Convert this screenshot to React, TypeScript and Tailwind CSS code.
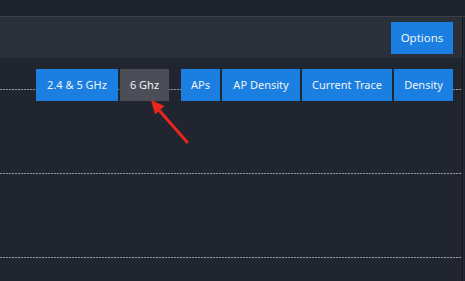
import React from "react";

const font = { fontFamily: '"Noto Sans", "Open Sans", sans-serif' };

function Btn({ label, w, active }: { label: string; w: string; active?: boolean }) {
  return (
    <div
      className={
        "h-[32px] flex items-center justify-center whitespace-nowrap text-[11px] text-[#eef3fa] " +
        w +
        " " +
        (active ? "bg-[#4b4e56]" : "bg-[#1a7fe0]")
      }
    >
      {label}
    </div>
  );
}

function Grid() {
  return (
    <div className="h-px w-full bg-[repeating-linear-gradient(90deg,#8e939b_0px,#8e939b_2px,#3c4049_2px,#3c4049_3px)]" />
  );
}

export default function App() {
  return (
    <div className="w-[465px] h-[281px] overflow-hidden bg-[#1f2330] flex flex-col" style={font}>
      <div className="h-[16px] shrink-0 bg-[#1e222d]" />
      <div className="h-px shrink-0 bg-[#3b3e44]" />
      <div className="flex flex-1 min-h-0">
        <div className="flex flex-col w-[463px] border-r border-[#15181d]">
          <div className="h-[41px] shrink-0 bg-[#2a3039] flex items-center justify-end pr-[9px]">
            <div className="h-[32px] w-[62px] flex items-center justify-center bg-[#1a7fe0] text-[11.5px] text-[#eef3fa]">
              Options
            </div>
          </div>
          <div className="relative flex-1 bg-[#20252f] flex flex-col pt-[31px] gap-[83px]">
            <Grid />
            <Grid />
            <Grid />
            <div className="absolute top-[11px] right-[9px] flex items-center">
              <div className="flex gap-[2px]">
                <Btn label="2.4 & 5 GHz" w="w-[82px]" />
                <Btn label="6 Ghz" w="w-[49px]" active />
              </div>
              <div className="w-[12px]" />
              <div className="flex gap-[2px] bg-[#20252f]">
                <Btn label="APs" w="w-[39px]" />
                <Btn label="AP Density" w="w-[78px]" />
                <Btn label="Current Trace" w="w-[90px]" />
                <Btn label="Density" w="w-[59px]" />
              </div>
            </div>
            <svg
              className="absolute left-0 top-[-58px] pointer-events-none"
              width="465"
              height="281"
              viewBox="0 0 465 281"
            >
              <line x1="187" y1="142" x2="158" y2="109" stroke="#e8261d" strokeWidth="3" strokeLinecap="round" />
              <polygon points="151,100 164.5,106 155,114.5" fill="#e8261d" />
            </svg>
          </div>
        </div>
        <div className="w-px bg-[#272b33]" />
      </div>
    </div>
  );
}
